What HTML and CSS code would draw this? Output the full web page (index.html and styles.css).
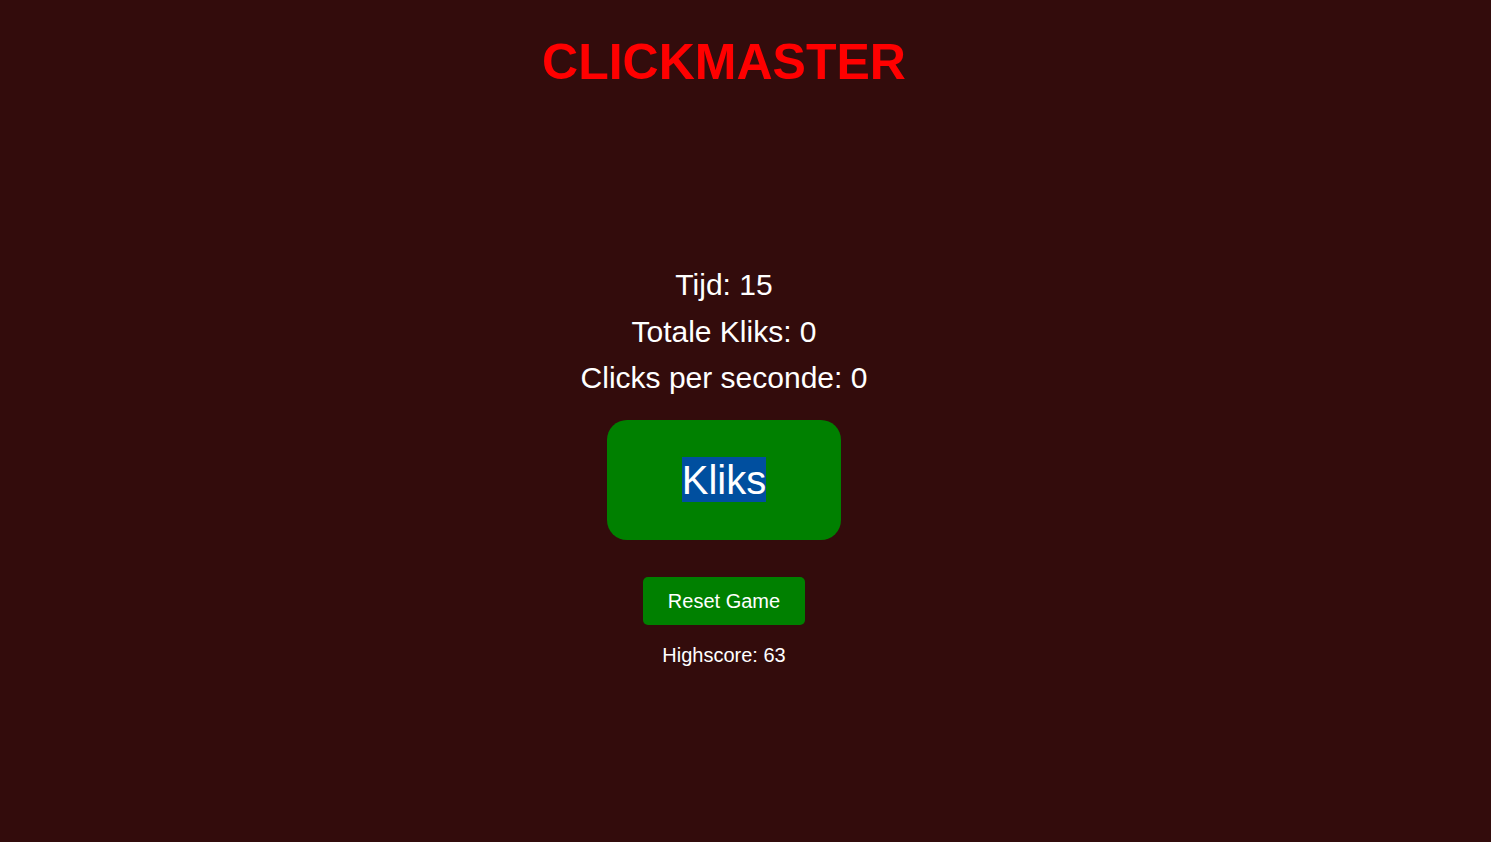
FILE: index.html
```html
<!DOCTYPE html>
<html lang="nl">
<head>
<meta charset="utf-8">
<title>Clickmaster</title>
<link rel="stylesheet" href="styles.css">
</head>
<body>
  <h1 class="title">CLICKMASTER</h1>
  <main class="game">
    <div class="stats">
      <p class="stat">Tijd: 15</p>
      <p class="stat">Totale Kliks: 0</p>
      <p class="stat">Clicks per seconde: 0</p>
    </div>
    <button class="click-btn"><span class="sel">Kliks</span></button>
    <button class="reset-btn">Reset Game</button>
    <p class="highscore">Highscore: 63</p>
  </main>
</body>
</html>
```
FILE: styles.css
```css
html, body {
  margin: 0;
  padding: 0;
}
body {
  background: #330c0c;
  font-family: "Liberation Sans", Arial, sans-serif;
  color: #ffffff;
  min-height: 842px;
  padding-right: 43px;
  display: flex;
  flex-direction: column;
  align-items: center;
}
.title {
  margin: 34px 0 0;
  font-size: 50px;
  font-weight: bold;
  color: #ff0000;
  line-height: 57px;
}
.game {
  margin-top: 177px;
  display: flex;
  flex-direction: column;
  align-items: center;
}
.stats {
  display: flex;
  flex-direction: column;
  align-items: center;
  gap: 12px;
}
.stat {
  margin: 0;
  font-size: 30px;
  line-height: 34.5px;
}
.click-btn {
  margin-top: 24px;
  width: 234px;
  height: 120px;
  border: none;
  border-radius: 20px;
  background: #008000;
  color: #ffffff;
  font-family: "Liberation Sans", Arial, sans-serif;
  font-size: 40px;
  display: flex;
  align-items: center;
  justify-content: center;
  padding: 0;
}
.sel {
  background: #004f9f;
  line-height: 44px;
  padding-top: 1px;
}
.reset-btn {
  margin-top: 37px;
  width: 162px;
  height: 48px;
  border: none;
  border-radius: 5px;
  background: #008000;
  color: #ffffff;
  font-family: "Liberation Sans", Arial, sans-serif;
  font-size: 20px;
  padding: 0;
  line-height: 48px;
}
.highscore {
  margin: 19px 0 0;
  font-size: 20px;
  line-height: 23px;
}
```
